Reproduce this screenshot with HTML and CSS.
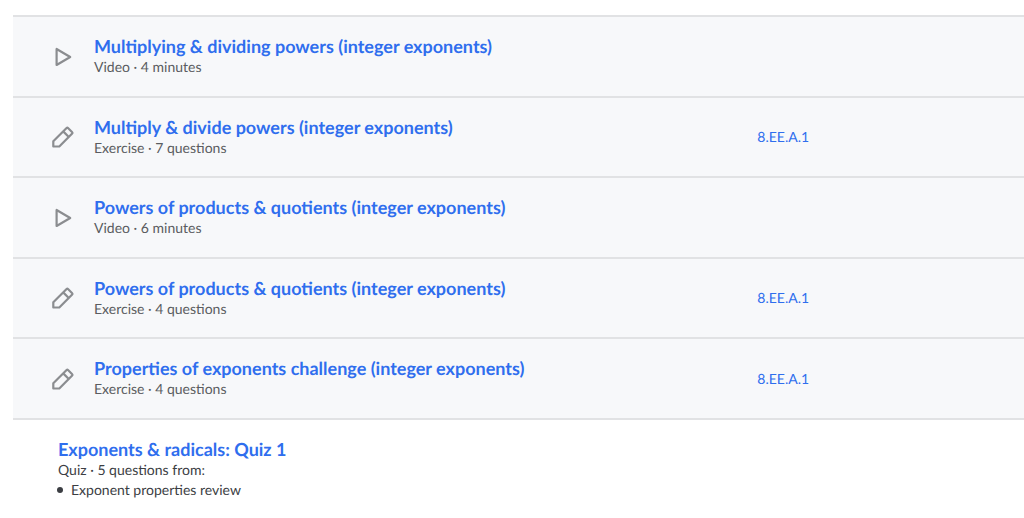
FILE: index.html
```html
<!DOCTYPE html>
<html lang="en">
<head>
<meta charset="utf-8">
<meta name="viewport" content="width=device-width, initial-scale=1">
<title>Exponents &amp; radicals</title>
<link rel="stylesheet" href="styles.css">
</head>
<body>
<svg class="sprite" aria-hidden="true">
  <symbol id="play" viewBox="0 0 24 24"><path d="M5.6 4v16L19.2 12z" fill="none" stroke="currentColor" stroke-width="2.2" stroke-linejoin="round"/></symbol>
  <symbol id="pencil" viewBox="0 0 24 24"><path d="M2.3 21.5v-5.2L15.6 3a1 1 0 0 1 1.4 0l4.2 4.2a1 1 0 0 1 0 1.4L8.3 21.5zM12.2 6.4l5.6 5.6" fill="none" stroke="currentColor" stroke-width="2.2" stroke-linejoin="round"/></symbol>
</svg>
<main class="unit">
  <ul class="lessons">
    <li class="lesson">
      <svg class="icon" aria-hidden="true"><use href="#play"/></svg>
      <div class="info"><a class="title" href="#">Multiplying &amp; dividing powers (integer exponents)</a><p class="meta">Video · 4 minutes</p></div>
    </li>
    <li class="lesson">
      <svg class="icon" aria-hidden="true"><use href="#pencil"/></svg>
      <div class="info"><a class="title" href="#">Multiply &amp; divide powers (integer exponents)</a><p class="meta">Exercise · 7 questions</p></div>
      <a class="standard" href="#">8.EE.A.1</a>
    </li>
    <li class="lesson">
      <svg class="icon" aria-hidden="true"><use href="#play"/></svg>
      <div class="info"><a class="title" href="#">Powers of products &amp; quotients (integer exponents)</a><p class="meta">Video · 6 minutes</p></div>
    </li>
    <li class="lesson">
      <svg class="icon" aria-hidden="true"><use href="#pencil"/></svg>
      <div class="info"><a class="title" href="#">Powers of products &amp; quotients (integer exponents)</a><p class="meta">Exercise · 4 questions</p></div>
      <a class="standard" href="#">8.EE.A.1</a>
    </li>
    <li class="lesson">
      <svg class="icon" aria-hidden="true"><use href="#pencil"/></svg>
      <div class="info"><a class="title" href="#">Properties of exponents challenge (integer exponents)</a><p class="meta">Exercise · 4 questions</p></div>
      <a class="standard" href="#">8.EE.A.1</a>
    </li>
  </ul>
  <section class="quiz">
    <a class="title" href="#">Exponents &amp; radicals: Quiz 1</a>
    <p class="meta">Quiz · 5 questions from:</p>
    <ul class="topics"><li>Exponent properties review</li></ul>
  </section>
</main>
</body>
</html>
```
FILE: styles.css
```css
* { box-sizing: border-box; }
body { margin: 0; background: #fff; color: #21242c; font-family: Lato, "Noto Sans", sans-serif; text-rendering: geometricPrecision; }
p, ul { margin: 0; padding: 0; list-style: none; }
a { text-decoration: none; color: #2f6eee; }
.sprite { display: none; }
.unit { padding: 15px 0 16px 13px; }
.lessons {
  display: grid;
  grid-auto-rows: minmax(81px, auto) minmax(80px, auto);
  border-top: 2px solid #e1e2e4;
}
.lesson {
  display: grid;
  grid-template-columns: 24px 7fr 3fr;
  align-items: center;
  padding: 16px 0 16px 38px;
  background: #f7f8fa;
  border-bottom: 2px solid #e1e2e4;
}
.icon { width: 24px; height: 24px; color: #8b8d90; }
.info { padding: 0 0 3px 19px; }
.title { display: block; font-size: 18px; font-weight: 700; line-height: 24px; }
.meta { font-size: 14px; line-height: 18px; color: #5a5c60; }
.standard { padding-left: 18px; font-size: 14px; line-height: 18px; }
.quiz { padding: 17px 0 0 44px; }
.quiz .title { padding-left: 1px; }
.quiz .meta { padding-left: 1px; }
.quiz .meta, .topics { color: #3b3e43; }
.topics { font-size: 14px; line-height: 22px; }
.topics li { display: flex; align-items: center; gap: 8px; }
.topics li::before { content: ""; width: 6px; height: 6px; border-radius: 50%; background: #3b3e43; }
```
